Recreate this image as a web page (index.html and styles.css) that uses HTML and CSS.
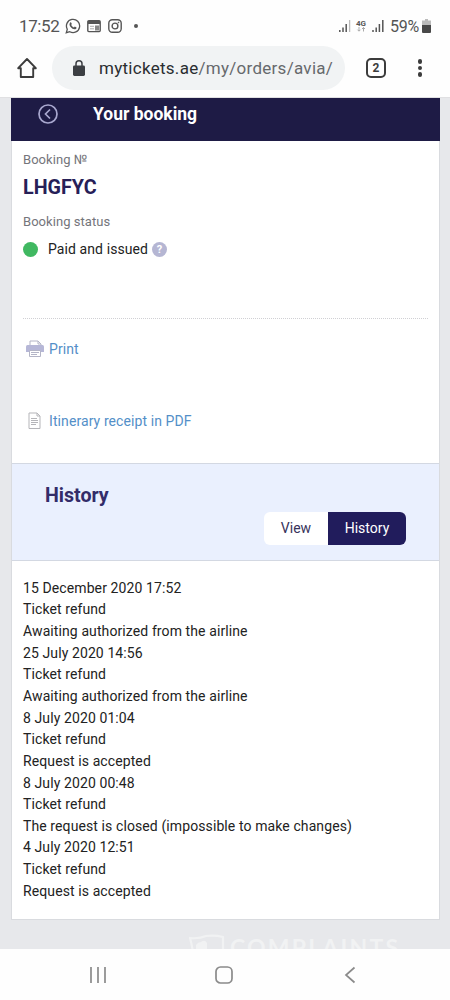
FILE: index.html
```
<!DOCTYPE html>
<html lang="en">
<head>
<meta charset="utf-8">
<title>Your booking</title>
<link rel="stylesheet" href="styles.css">
</head>
<body>
<div class="phone">
  <header class="chrome">
    <div class="status">
      <span class="clock">17:52</span>
      <svg class="s-wa" width="16" height="16" viewBox="0 0 16 16" fill="none" stroke="#555" stroke-width="1.3"><path d="M1.3 14.7l1-3.5A6.6 6.6 0 1 1 4.8 13.700z"/><path d="M5 4.700c.5-.7 1-.6 1.300.1l.5 1.200-.6.9c.6 1.200 1.500 2 2.700 2.500l.9-.8 1.700.8c.3 1-.9 2-2 1.900C6.800 11 4.300 8 4.500 6z" fill="#555" stroke="none"/></svg>
      <svg class="s-news" width="14" height="14" viewBox="0 0 14 14"><rect x=".8" y="1.800" width="12.400" height="10.800" rx="1" fill="none" stroke="#555" stroke-width="1.400"/><path d="M1 2h12v3H1z" fill="#555"/><path d="M3 7.300h4M3 9.800h4" stroke="#aaa"/><path d="M8 6.500h4v5H8z" fill="#888"/></svg>
      <svg class="s-ig" width="14" height="14" viewBox="0 0 14 14" fill="none" stroke="#555" stroke-width="1.400"><rect x=".8" y=".8" width="12.400" height="12.400" rx="3.500"/><circle cx="7" cy="7" r="2.900"/><circle cx="10.500" cy="3.500" r=".5" fill="#555" stroke-width=".6"/></svg>
      <span class="dot"></span>
      <svg class="s-right" width="53" height="16" viewBox="0 0 53 16"><path d="M1.800 14v-2M5 14V9.500M8.200 14V6" stroke="#555" stroke-width="1.500"/><path d="M11.600 14V2" stroke="#bbb" stroke-width="1.300"/><text x="18" y="7.500" class="net">4G</text><path d="M21 9v4M19.500 11.700l1.500 1.500 1.500-1.500M25.500 13.500v-4M24 11l1.500-1.500L27 11" stroke="#aaa" fill="none"/><path d="M35 14v-2M38.200 14V9.500M41.400 14V6M44.800 14V2" stroke="#555" stroke-width="1.500"/></svg>
      <span class="pct">59%</span>
      <svg class="batt" width="9" height="14" viewBox="0 0 9 14"><path d="M3 0h3v1.500h3V7H0V1.500h3z" fill="#bbb"/><path d="M0 6h9v7q0 1-1 1H1q-1 0-1-1z" fill="#484848"/></svg>
    </div>
    <div class="toolbar">
      <svg class="home" width="20" height="22" viewBox="0 0 20 22" fill="none" stroke="#3c3c3c" stroke-width="1.900" stroke-linejoin="round"><path d="M1.200 11.200L10 2l8.800 9.200H16.200V20H3.800V11.200z"/></svg>
      <div class="address">
        <svg width="12" height="16" viewBox="0 0 12 16"><rect y="5.500" width="12" height="10.500" rx="1.400" fill="#3c3f43"/><path d="M3 6V3.800a3 3 0 0 1 6 0V6" fill="none" stroke="#3c3f43" stroke-width="1.500"/></svg>
        <span class="url">mytickets.ae<span class="path">/my/orders/avia/</span></span>
      </div>
      <span class="tabs">2</span>
      <span class="more"><i></i><i></i><i></i></span>
    </div>
  </header>
  <main class="page">
    <div class="titlebar">
      <svg width="20" height="20" viewBox="0 0 20 20" fill="none" stroke="#a9a8cf" stroke-width="1.700"><circle cx="10" cy="10" r="9"/><path d="M12 5.500L7.500 10l4.500 4.500"/></svg>
      <span class="title">Your booking</span>
    </div>
    <div class="card">
      <section class="booking">
        <div class="label">Booking №</div>
        <div class="code">LHGFYC</div>
        <div class="label second">Booking status</div>
        <div class="state"><span class="green"></span><span class="paid">Paid and issued</span><span class="help">?</span></div>
      </section>
      <section class="links">
        <a class="link"><svg width="18" height="18" viewBox="0 0 18 18"><path d="M4 6V1h8l3 3v2" fill="#fff" stroke="#b4b5c6"/><path d="M12 1v3h3" fill="none" stroke="#b4b5c6"/><path d="M1.500 5h15Q18 5 18 6.500V12H0V6.500Q0 5 1.500 5z" fill="#b6b7d7"/><path d="M3.500 10.500h11v6h-11z" fill="#fff" stroke="#b4b5c6"/><path d="M5 12.500h8M5 14.500h6" stroke="#b4b5c6"/></svg><span>Print</span></a>
        <a class="link pdf"><svg width="18" height="18" viewBox="0 0 18 18" fill="none" stroke="#b5b5b9"><path d="M3 1h8l3 3v12.500H3zM11 1v3h3M5 6.500h6M5 8.500h7M5 10.500h7M5 12.500h5"/></svg><span>Itinerary receipt in PDF</span></a>
      </section>
      <section class="history-head">
        <h2 class="heading">History</h2>
        <div class="switch"><span class="view">View</span><span class="active">History</span></div>
      </section>
      <section class="log">
        <div>15 December 2020 17:52</div>
        <div>Ticket refund</div>
        <div>Awaiting authorized from the airline</div>
        <div>25 July 2020 14:56</div>
        <div>Ticket refund</div>
        <div>Awaiting authorized from the airline</div>
        <div>8 July 2020 01:04</div>
        <div>Ticket refund</div>
        <div>Request is accepted</div>
        <div>8 July 2020 00:48</div>
        <div>Ticket refund</div>
        <div>The request is closed (impossible to make changes)</div>
        <div>4 July 2020 12:51</div>
        <div>Ticket refund</div>
        <div>Request is accepted</div>
      </section>
    </div>
    <div class="watermark">
      <svg width="36" height="20" viewBox="0 0 36 20" fill="none" stroke="#f1f2f3" stroke-width="2.200"><path d="M1 4q9 1 16-2 9-1 17 1v16H4Q3 11 1 4z"/><path d="M7 18V11q2-3 5-3 4-3 6 1v9z" fill="#f1f2f3" stroke="none"/></svg>
      <span>COMPLAINTS</span>
    </div>
  </main>
  <nav class="nav">
    <svg width="18" height="18" viewBox="0 0 18 18" stroke="#8b8b8b" stroke-width="1.700"><path d="M2 1v16M9 1v16M16 1v16"/></svg>
    <svg width="18" height="18" viewBox="0 0 18 18" fill="none" stroke="#8b8b8b" stroke-width="1.700"><rect x="1" y="1" width="16" height="16" rx="4.500"/></svg>
    <svg width="18" height="18" viewBox="0 0 18 18" fill="none" stroke="#8b8b8b" stroke-width="1.700"><path d="M13.500 1.500L5 9l8.500 7.500"/></svg>
  </nav>
</div>
</body>
</html>
```
FILE: styles.css
```
* { box-sizing: border-box; }
body { margin: 0; font-family: Roboto, "Liberation Sans", sans-serif; background: #fff; }
svg { display: block; flex: none; }
.phone { width: 450px; height: 1000px; display: flex; flex-direction: column; overflow: hidden; }
.chrome { height: 98px; flex: none; border-bottom: 1px solid #e0e0e2; background: #fefefe; }
.status { height: 44px; padding: 8px 19px 0 19px; display: flex; align-items: center; color: #555; }
.clock { width: 46px; font-size: 17px; letter-spacing: -0.4px; white-space: nowrap; }
.s-news { margin-left: 6px; }
.s-ig { margin-left: 7px; }
.dot { width: 4px; height: 4px; margin-left: 12px; border-radius: 50%; background: #555; }
.s-right { margin-left: auto; }
.net { font-size: 8px; font-weight: 700; fill: #555; }
.pct { width: 32px; margin-left: -1px; font-size: 16px; letter-spacing: -0.2px; white-space: nowrap; }
.toolbar { height: 53px; padding: 2px 28px 7px 17px; display: flex; align-items: center; }
.home { margin-top: -1px; }
.address { width: 293px; height: 44px; margin-left: 15px; padding-left: 21px; display: flex; align-items: center; gap: 14px; border-radius: 22px; background: #f1f3f4; white-space: nowrap; }
.url { font-size: 17px; letter-spacing: 0.28px; color: #2a2d30; }
.path { color: #66696c; }
.tabs { width: 20px; height: 20px; margin-left: 21px; border: 2px solid #3c3c3c; border-radius: 5px; font-size: 12px; font-weight: 700; line-height: 16px; text-align: center; color: #3c3c3c; }
.more { margin-left: auto; display: flex; flex-direction: column; gap: 2px; }
.more i { width: 4.500px; height: 4.500px; border-radius: 50%; background: #3c3c3c; }
.page { height: 851px; flex: none; overflow: hidden; padding: 0 10px 0 11px; background: #e7e8eb; }
.titlebar { height: 43px; padding: 0 0 11px 27px; display: flex; align-items: center; background: #1e1b45; }
.title { margin-left: 35px; font-size: 17.500px; line-height: 20px; margin-top: -1px; font-weight: 700; color: #fff; }
.card { height: 779px; background: #fff; border: 1px solid #d9dbdf; border-top: 0; }
.booking { height: 178px; margin: 0 11px; padding-top: 10px; border-bottom: 1px dotted #d0d0d4; }
.label { font-size: 13px; line-height: 18px; letter-spacing: 0.05px; color: #74757b; }
.code { margin-top: 6px; font-size: 19.700px; line-height: 26px; font-weight: 700; color: #272057; }
.second { margin-top: 12px; }
.state { height: 20px; margin-top: 8px; display: flex; align-items: center; font-size: 14px; letter-spacing: 0.09px; color: #222; }
.green { width: 15px; height: 15px; border-radius: 50%; background: #40b861; }
.paid { margin-left: 10px; }
.help { width: 15px; height: 15px; margin-left: 4px; border-radius: 50%; background: #b5b6d3; color: #fff; font-size: 11px; font-weight: 700; line-height: 15px; text-align: center; }
.links { height: 144px; padding: 20px 0 0 14px; }
.link { height: 20px; display: flex; align-items: center; gap: 5px; font-size: 14px; letter-spacing: 0.09px; color: #538fc8; }
.pdf { margin-top: 52px; }
.history-head { height: 98px; padding: 20px 33px 0; border: solid #d3d8e2; border-width: 1px 0; background: #eaf0fe; }
.heading { margin: 0; font-size: 19.600px; line-height: 24px; color: #332c69; }
.switch { width: 142px; height: 33px; margin: 4px 0 0 auto; display: flex; border-radius: 6px; overflow: hidden; background: #fff; font-size: 14px; line-height: 32px; text-align: center; }
.view { width: 64px; color: #37335b; }
.active { width: 78px; background: #211c5c; color: #fff; }
.log { padding: 16.600px 11px 0; font-size: 14px; letter-spacing: 0.1px; line-height: 21.660px; color: #222; white-space: nowrap; }
.watermark { height: 29px; padding: 14px 0 0 178px; display: flex; gap: 5px; overflow: hidden; color: #f1f2f3; font: 700 23px/26px Lato, sans-serif; letter-spacing: 2.200px; }
.nav { height: 51px; flex: none; padding: 17px 91px 0 89px; display: flex; justify-content: space-between; background: #fefefe; }
```
